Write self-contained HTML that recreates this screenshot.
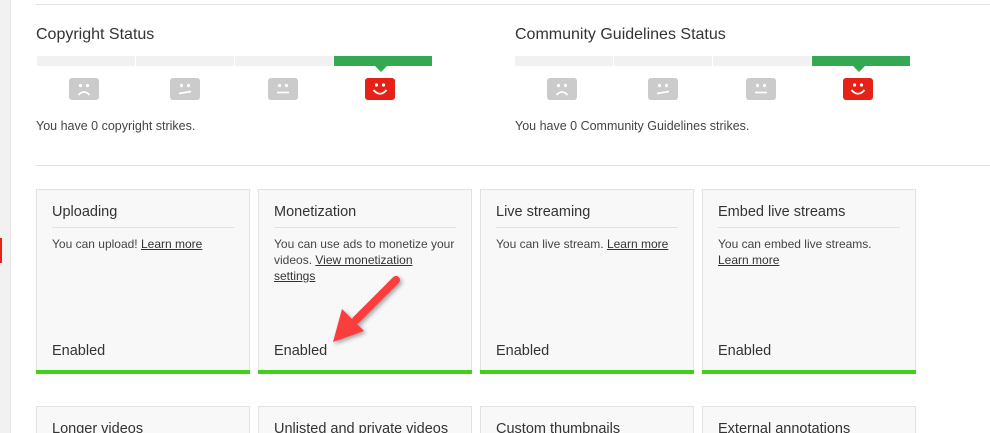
<!DOCTYPE html>
<html><head><meta charset="utf-8">
<style>
*{margin:0;padding:0;box-sizing:border-box}
html,body{width:990px;height:433px;overflow:hidden;background:#fff;font-family:"Liberation Sans",Arial,sans-serif;color:#333;position:relative}
.abs{position:absolute}
.strip{left:0;top:0;width:11px;height:433px;background:#f1f1f1;border-right:1px solid #e4e4e4}
.h1{font-size:16px;color:#333;}
.card{position:absolute;width:214px;height:185px;background:#f8f8f8;border:1px solid #e2e2e2;border-bottom:none}
.card .t{position:absolute;left:15px;top:14px;font-size:14.5px;color:#333}
.card .sep{position:absolute;left:15px;right:15px;top:37px;height:1px;background:#e2e2e2}
.card .b{position:absolute;left:15px;width:196px;top:46px;font-size:12px;line-height:16px;color:#444;white-space:nowrap}
.card .b u{color:#333}
.card .e{position:absolute;left:15px;top:153px;font-size:14.5px;color:#333}
.card .g{position:absolute;left:-1px;right:-1px;bottom:0;height:4px;background:#3fd118}
.card.r2{height:27px}
</style></head><body>
<div class="abs strip"></div>
<div class="abs" style="left:0;top:238px;width:2px;height:25px;background:#e62117"></div>
<div class="abs" style="left:36px;top:4px;width:954px;height:1px;background:#e2e2e2"></div>
<div class="abs" style="left:36px;top:165px;width:954px;height:1px;background:#e2e2e2"></div>

<div class="abs h1" style="left:36px;top:26px">Copyright Status</div>
<div class="abs h1" style="left:515px;top:26px">Community Guidelines Status</div>

<svg class="abs" style="left:0;top:50px" width="990" height="55">
<defs>
<g id="fr"><rect width="30" height="22" rx="3" fill="#cbcbcb"/><circle cx="11.5" cy="7.5" r="1.6" fill="#fff"/><circle cx="18.5" cy="7.5" r="1.6" fill="#fff"/><path d="M9.5 17 Q15 11 20.5 17" stroke="#fff" stroke-width="1.7" fill="none"/></g>
<g id="cr"><rect width="30" height="22" rx="3" fill="#cbcbcb"/><circle cx="11.5" cy="7.5" r="1.6" fill="#fff"/><circle cx="18.5" cy="7.5" r="1.6" fill="#fff"/><path d="M9 15.5 L21 13.5" stroke="#fff" stroke-width="1.7" fill="none"/></g>
<g id="fl"><rect width="30" height="22" rx="3" fill="#cbcbcb"/><circle cx="11.5" cy="7.5" r="1.6" fill="#fff"/><circle cx="18.5" cy="7.5" r="1.6" fill="#fff"/><path d="M9 14.5 L21 14.5" stroke="#fff" stroke-width="1.7" fill="none"/></g>
<g id="sm"><rect width="30" height="22" rx="3" fill="#e62117"/><circle cx="11.5" cy="7" r="1.6" fill="#fff"/><circle cx="18.5" cy="7" r="1.6" fill="#fff"/><path d="M8.5 12 Q15 19.5 21.5 12" stroke="#fff" stroke-width="1.8" fill="none"/></g>
</defs>
<g>
<rect x="37" y="6" width="98" height="10" fill="#f1f1f1"/>
<rect x="136" y="6" width="98" height="10" fill="#f1f1f1"/>
<rect x="235" y="6" width="98" height="10" fill="#f1f1f1"/>
<rect x="334" y="6" width="98" height="10" fill="#34a853"/>
<path d="M375 16 L381 22 L387 16Z" fill="#34a853"/>
<use href="#fr" x="69" y="28"/><use href="#cr" x="170" y="28"/><use href="#fl" x="268" y="28"/><use href="#sm" x="365" y="28"/>
</g>
<g transform="translate(478,0)">
<rect x="37" y="6" width="98" height="10" fill="#f1f1f1"/>
<rect x="136" y="6" width="98" height="10" fill="#f1f1f1"/>
<rect x="235" y="6" width="98" height="10" fill="#f1f1f1"/>
<rect x="334" y="6" width="98" height="10" fill="#34a853"/>
<path d="M375 16 L381 22 L387 16Z" fill="#34a853"/>
<use href="#fr" x="69" y="28"/><use href="#cr" x="170" y="28"/><use href="#fl" x="268" y="28"/><use href="#sm" x="365" y="28"/>
</g>
</svg>

<div class="abs" style="left:36px;top:119px;font-size:12.5px;color:#444">You have 0 copyright strikes.</div>
<div class="abs" style="left:515px;top:119px;font-size:12.5px;color:#444">You have 0 Community Guidelines strikes.</div>

<div class="card" style="left:36px;top:189px"><div class="t">Uploading</div><div class="sep"></div><div class="b">You can upload! <u>Learn more</u></div><div class="e">Enabled</div><div class="g"></div></div>
<div class="card" style="left:258px;top:189px"><div class="t">Monetization</div><div class="sep"></div><div class="b">You can use ads to monetize your<br>videos. <u>View monetization</u><br><u>settings</u></div><div class="e">Enabled</div><div class="g"></div></div>
<div class="card" style="left:480px;top:189px"><div class="t">Live streaming</div><div class="sep"></div><div class="b">You can live stream. <u>Learn more</u></div><div class="e">Enabled</div><div class="g"></div></div>
<div class="card" style="left:702px;top:189px"><div class="t">Embed live streams</div><div class="sep"></div><div class="b">You can embed live streams.<br><u>Learn more</u></div><div class="e">Enabled</div><div class="g"></div></div>

<div class="card r2" style="left:36px;top:406px"><div class="t">Longer videos</div></div>
<div class="card r2" style="left:258px;top:406px"><div class="t">Unlisted and private videos</div></div>
<div class="card r2" style="left:480px;top:406px"><div class="t">Custom thumbnails</div></div>
<div class="card r2" style="left:702px;top:406px"><div class="t">External annotations</div></div>

<svg class="abs" style="left:320px;top:265px" width="100" height="90">
<defs><filter id="sh" x="-30%" y="-30%" width="160%" height="160%"><feDropShadow dx="2" dy="2" stdDeviation="2" flood-color="#000" flood-opacity="0.35"/></filter></defs>
<g filter="url(#sh)" fill="#fa3c3c">
<line x1="76" y1="15" x2="36" y2="55" stroke="#fa3c3c" stroke-width="8" stroke-linecap="round"/>
<path d="M13 77 L22 44 L44 66 Z"/>
</g>
</svg>
</body></html>
